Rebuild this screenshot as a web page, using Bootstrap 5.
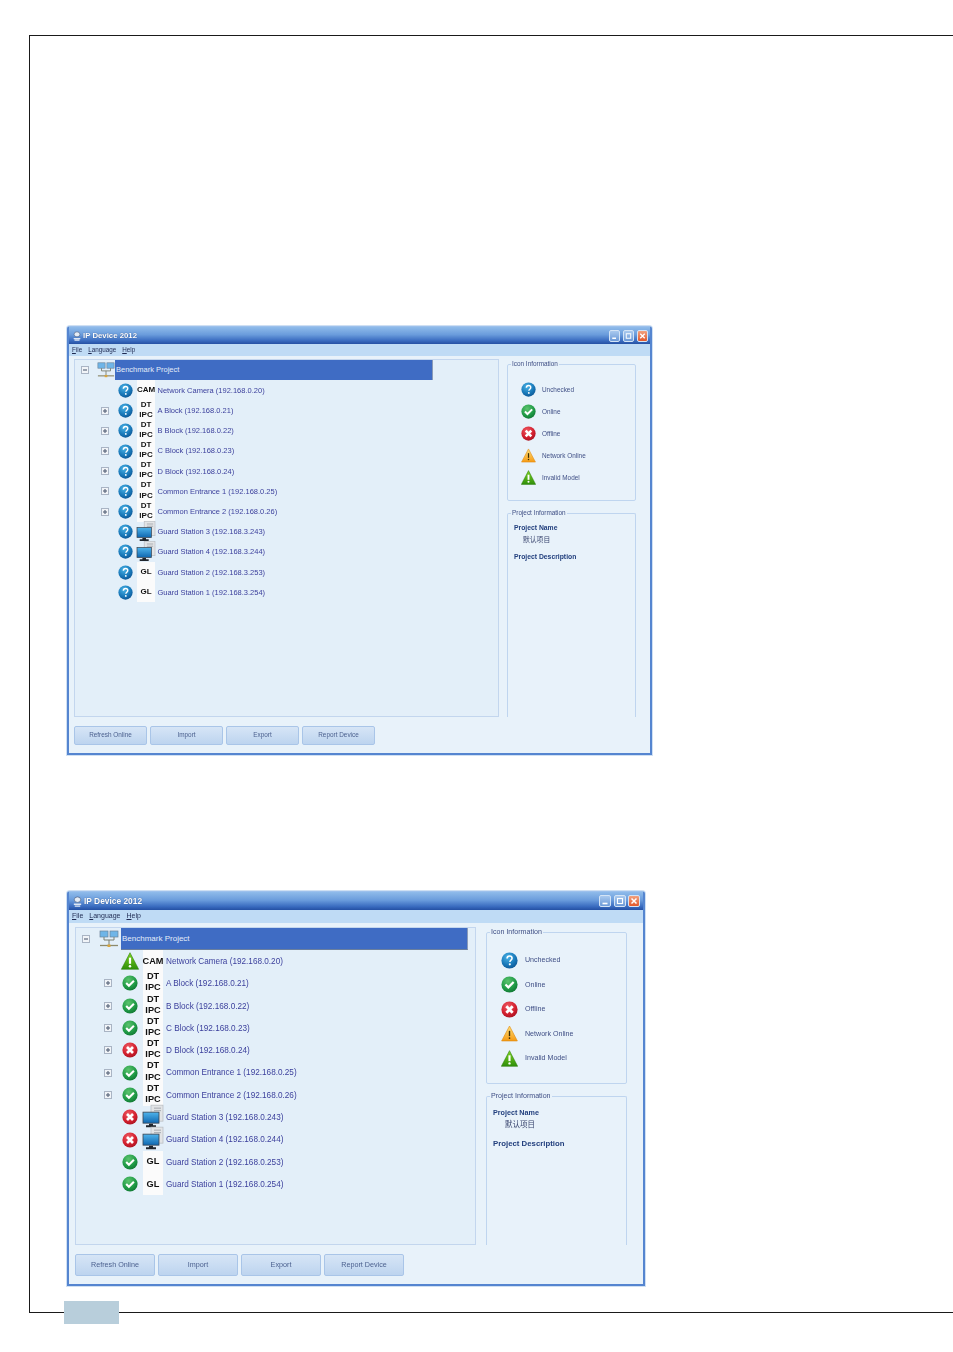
<!DOCTYPE html>
<html lang="en"><head><meta charset="utf-8"><title>IP Device 2012</title>
<link href="https://cdn.jsdelivr.net/npm/bootstrap@5.3.0/dist/css/bootstrap.min.css" rel="stylesheet">
<style>
body{background:#fff;margin:0;font-family:"Liberation Sans","Noto Sans CJK SC",sans-serif;}
.svg-sprite{position:absolute;width:0;height:0;}
.page-frame{margin:35px 0 0 29px;height:1278px;border:1px solid #1a1a1a;border-right:0;}
.page-tab{position:absolute;left:64px;top:1301px;width:55px;height:23px;background:#b8cedb;}
.win{display:flex;flex-direction:column;margin-left:var(--wx);width:var(--ww);height:var(--wh);border:2px solid #5585d0;border-top:1px solid #9cc0ec;border-radius:3px 3px 0 0;background:#e8f2fa;box-shadow:0 0 0 1px #cfe0f3;filter:blur(.35px);}
.win-one{--wx:37px;--ww:585px;--wh:429px;--fs:7.5px;--title:7.8px;--menu:6.3px;--sf:6.4px;margin-top:290px;}
.win-two{--wx:37px;--ww:578px;--wh:395px;--fs:8.2px;--title:8.4px;--menu:7px;--sf:7.1px;margin-top:136px;}
.win-title{flex:none;height:var(--th);display:flex;align-items:center;padding:0 2px 0 3px;background:linear-gradient(#8fbbea,#6a9cdc 45%,#3a6cc0 80%,#2450a4);color:#fff;font-size:var(--title);font-weight:700;}
.win-one .win-title{--th:17px;}.win-two .win-title{--th:18px;padding-right:3px;}
.win-title span{margin-left:1px;text-shadow:0 0 1px #23457f;}
.win-ctl{width:var(--cw);height:12px;border:1px solid #d4e4f6;border-radius:2px;background:linear-gradient(#a9c9ee,#6c9ad8);position:relative;margin-left:var(--cg);}
.win-one .win-ctl{--cw:11px;--cg:3px;}.win-two .win-ctl{--cw:12px;--cg:2.5px;}
.win-ctl.ctl-x{background:linear-gradient(#f2a27f,#e2582b);}
.win-ctl svg{position:absolute;inset:0;width:100%;height:100%;}
.win-menu{flex:none;display:flex;gap:var(--mg);align-items:center;height:var(--mh);padding-left:3px;background:#bfdbf5;font-size:var(--menu);color:#1f2a52;}
.win-one .win-menu{--mh:12px;--mg:6px;}.win-two .win-menu{--mh:13px;--mg:6px;}
.win-body{flex:none;display:flex;min-height:0;}
.win-one .win-body{padding:3px 0 0 5px;}.win-two .win-body{padding:4px 0 0 6px;}
.tree-panel{flex:none;width:var(--pw);height:var(--ph);border:1px solid #c3d6ee;background:#e3eff9;}
.win-one .tree-panel{--pw:425px;--ph:358px;}.win-two .tree-panel{--pw:401px;--ph:318px;}
.tree-root,.tree-row{display:flex;align-items:center;font-size:var(--fs);color:#3b3f9c;white-space:nowrap;}
.win-one .tree-root{height:20px;margin-bottom:.4px;padding-left:6px;}
.win-two .tree-root{height:22px;padding-left:6px;}
.win-one .tree-row{height:20.2px;padding-left:26px;}
.win-two .tree-row{height:22.3px;padding-left:28px;}
.tree-exp{flex:none;width:8px;height:8px;border:1px solid #a9b4c4;background:#f1f4f8;position:relative;}
.tree-exp::before{content:"";position:absolute;left:1px;right:1px;top:2px;height:2px;background:#5f6b80;transform:scaleY(.6);}
.tree-exp.is-plus::after{content:"";position:absolute;top:1px;bottom:1px;left:2px;width:2px;background:#5f6b80;transform:scaleX(.6);}
.net-glyph{flex:none;}
.win-one .net-glyph{width:18px;height:18px;margin-left:8px;}
.win-two .net-glyph{width:20px;height:20px;margin-left:9px;margin-right:2px;}
.root-label{flex:1;align-self:stretch;display:flex;align-items:center;background:#3f6cc4;color:#e4edf9;padding-left:1px;border-right:1px solid #8a9bb8;}
.win-one .root-label{margin-right:65px;font-size:7.5px;}
.win-two .root-label{margin-right:7px;border-bottom:1px solid #6a7f9e;font-size:8px;padding-top:1px;}
.stat-glyph{flex:none;}
.win-one .stat-glyph{width:15px;height:15px;margin-left:8.5px;}
.win-two .stat-glyph{width:16px;height:16px;margin-left:10px;}
.win-one .no-exp{margin-left:16.5px;}.win-two .no-exp{margin-left:18px;}
.win-two .tri-root{width:20px;height:18px;margin-left:16px;margin-right:-2px;}
.tag-box{flex:none;align-self:stretch;background:#fbfbfb;color:#111;font-weight:700;display:flex;flex-direction:column;align-items:center;justify-content:center;line-height:1;}
.win-one .tag-box{width:18px;margin-left:4.5px;font-size:8px;}
.win-two .tag-box{width:20px;margin-left:5px;font-size:9.2px;}
.tag-pair{justify-content:space-between;padding:0 0 2px;}
.tag-pair b{display:block;font-weight:700;}
.tag-plain{background:transparent;}
.tag-plain svg{width:100%;height:100%;overflow:visible;}
.tree-text{margin-left:2.5px;}
.win-two .tree-text{margin-left:3px;padding-top:2px;}
.side-col{flex:none;display:flex;flex-direction:column;}
.win-one .side-col{width:129px;margin-left:8px;padding-top:2px;}
.win-two .side-col{width:141px;margin-left:10px;padding-top:2px;}
.side-set{border:1px solid #bfd5ef;border-radius:2px;color:#3f4f85;font-size:var(--sf);margin:0;padding:0;}
.side-set legend{float:none;width:auto;margin:0 0 0 3px;padding:0 1px;font-size:var(--sf);line-height:1;white-space:nowrap;color:#3f4f85;}
.win-one .set-icons{height:140px;margin-bottom:9px;}
.win-two .set-icons{height:155px;margin-bottom:9px;}
.set-proj{flex:none;border-bottom:0;border-radius:2px 2px 0 0;}
.win-one .set-proj{height:207px;}
.win-two .set-proj{height:152px;}
.legend-row{display:flex;align-items:center;}
.win-one .legend-row{height:22.1px;padding-left:13px;}
.win-two .legend-row{height:24.5px;padding-left:14px;}
.win-one .legend-list{padding-top:11px;}.win-two .legend-list{padding-top:12px;}
.legend-row svg{flex:none;}
.win-one .legend-row svg{width:15px;height:15px;margin-right:6px;}
.win-two .legend-row svg{width:17px;height:17px;margin-right:7px;}
.proj-name{font-weight:700;color:#23407e;}
.win-one .proj-block{padding:6px 0 0 6px;font-size:6.8px;line-height:11.5px;}
.win-two .proj-block{padding:7px 0 0 6px;font-size:7.2px;line-height:11.5px;}
.proj-val{padding-left:9px;color:#39456e;}
.win-two .proj-val{padding-left:12px;font-size:7.5px;}
.win-one .proj-desc{margin-top:6px;}.win-two .proj-desc{margin-top:8px;font-size:7.8px;}
.btn-bar{flex:none;display:flex;}
.win-one .btn-bar{padding:9px 0 0 5px;gap:3px;}
.win-two .btn-bar{padding:9px 0 0 6px;gap:3px;}
.btn-bar .btn{--bs-btn-padding-x:0;--bs-btn-padding-y:0;--bs-btn-border-radius:2px;flex:none;background:linear-gradient(#d6e5f6,#bdd4ef);border:1px solid #a9c5e8;color:#4c618f;line-height:1;}
.win-one .btn-bar .btn{width:73px;height:19px;font-size:6.4px;}
.win-two .btn-bar .btn{width:80px;height:22px;font-size:7.2px;}
</style></head><body>
<svg class="svg-sprite" aria-hidden="true">
<defs>
<radialGradient id="gBlue" cx=".4" cy=".3" r=".8"><stop offset="0" stop-color="#49b3e6"/><stop offset=".6" stop-color="#1877b8"/><stop offset="1" stop-color="#0c4f8c"/></radialGradient>
<radialGradient id="gGreen" cx=".4" cy=".3" r=".8"><stop offset="0" stop-color="#5cc46e"/><stop offset=".6" stop-color="#1f9a46"/><stop offset="1" stop-color="#0e6e2e"/></radialGradient>
<radialGradient id="gRed" cx=".4" cy=".3" r=".8"><stop offset="0" stop-color="#ef5a63"/><stop offset=".6" stop-color="#d21f2e"/><stop offset="1" stop-color="#9c0f1e"/></radialGradient>
<linearGradient id="gOrange" x1="0" y1="0" x2="0" y2="1"><stop offset="0" stop-color="#ffe27a"/><stop offset="1" stop-color="#f59a14"/></linearGradient>
<linearGradient id="gLime" x1="0" y1="0" x2="0" y2="1"><stop offset="0" stop-color="#7ed321"/><stop offset="1" stop-color="#2f8f0a"/></linearGradient>
<linearGradient id="gScreen" x1="0" y1="0" x2="0" y2="1"><stop offset="0" stop-color="#4fb4ec"/><stop offset="1" stop-color="#0f67b0"/></linearGradient>
<symbol id="i-q" viewBox="0 0 16 16"><circle cx="8" cy="8" r="7.6" fill="url(#gBlue)"/><path d="M5.700 6.200c0-1.500 1-2.400 2.400-2.400s2.300.8 2.300 2c0 1.900-2 1.800-2 3.500" fill="none" stroke="#fff" stroke-width="1.500"/><circle cx="8.300" cy="11.600" r="1" fill="#fff"/></symbol>
<symbol id="i-ok" viewBox="0 0 16 16"><circle cx="8" cy="8" r="7.6" fill="url(#gGreen)"/><path d="M4.200 8l2.700 2.700 5-5" fill="none" stroke="#fff" stroke-width="2.100"/></symbol>
<symbol id="i-x" viewBox="0 0 16 16"><circle cx="8" cy="8" r="7.6" fill="url(#gRed)"/><path d="M5 5l6 6M11 5l-6 6" fill="none" stroke="#fff" stroke-width="2.700"/></symbol>
<symbol id="i-warn" viewBox="0 0 16 16"><path d="M8 1l7.400 14H.6z" fill="url(#gOrange)" stroke="#e08a10" stroke-width=".6"/><path d="M8 5.500v5" stroke="#3a2c05" stroke-width="1.300"/><circle cx="8" cy="12.300" r=".8" fill="#3a2c05"/></symbol>
<symbol id="i-bad" viewBox="0 0 16 16"><path d="M8 .6l7.700 14.800H.3z" fill="url(#gLime)" stroke="#2b7d0a" stroke-width=".5"/><path d="M8 5v5.500" stroke="#fff" stroke-width="2"/><circle cx="8" cy="12.600" r="1.100" fill="#fff"/></symbol>
<symbol id="i-pc" viewBox="0 0 20 20" overflow="visible"><rect x="8" y="-2" width="12" height="16" fill="#e2e4e6" stroke="#b6babf" stroke-width=".7"/><path d="M11 1h7M11 3.500h7" stroke="#9fa4aa" stroke-width=".9"/><rect x="0" y="5" width="16" height="11" fill="url(#gScreen)" stroke="#39434f" stroke-width=".8"/><path d="M6 16.500h4v1.500h3v2H3v-2h3z" fill="#20262d"/></symbol>
<symbol id="i-net" viewBox="0 0 20 20"><rect x="1" y="2" width="8" height="6" fill="#6fb5e8" stroke="#6c8398" stroke-width=".7"/><rect x="11" y="2" width="8" height="6" fill="#6fb5e8" stroke="#6c8398" stroke-width=".7"/><path d="M5 8v3h10V8M10 11v5" fill="none" stroke="#7a7f70" stroke-width="1"/><path d="M1 16.500h18" stroke="#8d8a6c" stroke-width="1.300"/><rect x="8.500" y="15.500" width="3" height="2.500" fill="#d7a53e"/></symbol>
<symbol id="i-app" viewBox="0 0 12 12"><ellipse cx="6" cy="4" rx="3.500" ry="3" fill="#e6edf6" stroke="#46597a" stroke-width=".7"/><path d="M2 9h8M3 11h6" stroke="#dfe8f4" stroke-width="1.500"/></symbol>
</defs>
</svg>

<div class="page-frame">

<section class="win win-one">
  <div class="win-title"><svg width="10" height="10"><use href="#i-app"/></svg><span>IP Device 2012</span>
    <div class="ms-auto d-flex">
      <div class="win-ctl"><svg viewBox="0 0 12 12"><rect x="3" y="8" width="5" height="2" fill="#fff"/></svg></div>
      <div class="win-ctl"><svg viewBox="0 0 12 12"><rect x="3" y="3" width="6" height="6" fill="none" stroke="#fff" stroke-width="1.300"/></svg></div>
      <div class="win-ctl ctl-x"><svg viewBox="0 0 12 12"><path d="M3 3l6 6M9 3l-6 6" stroke="#fff" stroke-width="1.800"/></svg></div>
    </div></div>
  <div class="win-menu"><span><u>F</u>ile</span><span><u>L</u>anguage</span><span><u>H</u>elp</span></div>
  <div class="win-body">
    <div class="tree-panel">
      <div class="tree-root"><div class="tree-exp"></div><svg class="net-glyph"><use href="#i-net"/></svg><div class="root-label">Benchmark Project</div></div>
      <div class="tree-row"><svg class="stat-glyph no-exp"><use href="#i-q"/></svg><div class="tag-box">CAM</div><span class="tree-text">Network Camera (192.168.0.20)</span></div>
      <div class="tree-row"><div class="tree-exp is-plus"></div><svg class="stat-glyph"><use href="#i-q"/></svg><div class="tag-box tag-pair"><b>DT</b><b>IPC</b></div><span class="tree-text">A Block (192.168.0.21)</span></div>
      <div class="tree-row"><div class="tree-exp is-plus"></div><svg class="stat-glyph"><use href="#i-q"/></svg><div class="tag-box tag-pair"><b>DT</b><b>IPC</b></div><span class="tree-text">B Block (192.168.0.22)</span></div>
      <div class="tree-row"><div class="tree-exp is-plus"></div><svg class="stat-glyph"><use href="#i-q"/></svg><div class="tag-box tag-pair"><b>DT</b><b>IPC</b></div><span class="tree-text">C Block (192.168.0.23)</span></div>
      <div class="tree-row"><div class="tree-exp is-plus"></div><svg class="stat-glyph"><use href="#i-q"/></svg><div class="tag-box tag-pair"><b>DT</b><b>IPC</b></div><span class="tree-text">D Block (192.168.0.24)</span></div>
      <div class="tree-row"><div class="tree-exp is-plus"></div><svg class="stat-glyph"><use href="#i-q"/></svg><div class="tag-box tag-pair"><b>DT</b><b>IPC</b></div><span class="tree-text">Common Entrance 1 (192.168.0.25)</span></div>
      <div class="tree-row"><div class="tree-exp is-plus"></div><svg class="stat-glyph"><use href="#i-q"/></svg><div class="tag-box tag-pair"><b>DT</b><b>IPC</b></div><span class="tree-text">Common Entrance 2 (192.168.0.26)</span></div>
      <div class="tree-row"><svg class="stat-glyph no-exp"><use href="#i-q"/></svg><div class="tag-box tag-plain"><svg><use href="#i-pc"/></svg></div><span class="tree-text">Guard Station 3 (192.168.3.243)</span></div>
      <div class="tree-row"><svg class="stat-glyph no-exp"><use href="#i-q"/></svg><div class="tag-box tag-plain"><svg><use href="#i-pc"/></svg></div><span class="tree-text">Guard Station 4 (192.168.3.244)</span></div>
      <div class="tree-row"><svg class="stat-glyph no-exp"><use href="#i-q"/></svg><div class="tag-box">GL</div><span class="tree-text">Guard Station 2 (192.168.3.253)</span></div>
      <div class="tree-row"><svg class="stat-glyph no-exp"><use href="#i-q"/></svg><div class="tag-box">GL</div><span class="tree-text">Guard Station 1 (192.168.3.254)</span></div>
    </div>
    <div class="side-col">
      <fieldset class="side-set set-icons"><legend>Icon Information</legend>
        <div class="legend-list">
          <div class="legend-row"><svg><use href="#i-q"/></svg>Unchecked</div>
          <div class="legend-row"><svg><use href="#i-ok"/></svg>Online</div>
          <div class="legend-row"><svg><use href="#i-x"/></svg>Offline</div>
          <div class="legend-row"><svg><use href="#i-warn"/></svg>Network Online</div>
          <div class="legend-row"><svg><use href="#i-bad"/></svg>Invalid Model</div>
        </div></fieldset>
      <fieldset class="side-set set-proj"><legend>Project Information</legend>
        <div class="proj-block"><div class="proj-name">Project Name</div><div class="proj-val">默认项目</div><div class="proj-name proj-desc">Project Description</div></div></fieldset>
    </div>
  </div>
  <div class="btn-bar"><button class="btn" type="button">Refresh Online</button><button class="btn" type="button">Import</button><button class="btn" type="button">Export</button><button class="btn" type="button">Report Device</button></div>
</section>

<section class="win win-two">
  <div class="win-title"><svg width="11" height="11"><use href="#i-app"/></svg><span>IP Device 2012</span>
    <div class="ms-auto d-flex">
      <div class="win-ctl"><svg viewBox="0 0 12 12"><rect x="3" y="8" width="6" height="2" fill="#fff"/></svg></div>
      <div class="win-ctl"><svg viewBox="0 0 12 12"><rect x="3" y="3" width="6" height="6" fill="none" stroke="#fff" stroke-width="1.300"/></svg></div>
      <div class="win-ctl ctl-x"><svg viewBox="0 0 12 12"><path d="M3 3l6 6M9 3l-6 6" stroke="#fff" stroke-width="1.800"/></svg></div>
    </div></div>
  <div class="win-menu"><span><u>F</u>ile</span><span><u>L</u>anguage</span><span><u>H</u>elp</span></div>
  <div class="win-body">
    <div class="tree-panel">
      <div class="tree-root"><div class="tree-exp"></div><svg class="net-glyph"><use href="#i-net"/></svg><div class="root-label">Benchmark Project</div></div>
      <div class="tree-row"><svg class="stat-glyph tri-root"><use href="#i-bad"/></svg><div class="tag-box">CAM</div><span class="tree-text">Network Camera (192.168.0.20)</span></div>
      <div class="tree-row"><div class="tree-exp is-plus"></div><svg class="stat-glyph"><use href="#i-ok"/></svg><div class="tag-box tag-pair"><b>DT</b><b>IPC</b></div><span class="tree-text">A Block (192.168.0.21)</span></div>
      <div class="tree-row"><div class="tree-exp is-plus"></div><svg class="stat-glyph"><use href="#i-ok"/></svg><div class="tag-box tag-pair"><b>DT</b><b>IPC</b></div><span class="tree-text">B Block (192.168.0.22)</span></div>
      <div class="tree-row"><div class="tree-exp is-plus"></div><svg class="stat-glyph"><use href="#i-ok"/></svg><div class="tag-box tag-pair"><b>DT</b><b>IPC</b></div><span class="tree-text">C Block (192.168.0.23)</span></div>
      <div class="tree-row"><div class="tree-exp is-plus"></div><svg class="stat-glyph"><use href="#i-x"/></svg><div class="tag-box tag-pair"><b>DT</b><b>IPC</b></div><span class="tree-text">D Block (192.168.0.24)</span></div>
      <div class="tree-row"><div class="tree-exp is-plus"></div><svg class="stat-glyph"><use href="#i-ok"/></svg><div class="tag-box tag-pair"><b>DT</b><b>IPC</b></div><span class="tree-text">Common Entrance 1 (192.168.0.25)</span></div>
      <div class="tree-row"><div class="tree-exp is-plus"></div><svg class="stat-glyph"><use href="#i-ok"/></svg><div class="tag-box tag-pair"><b>DT</b><b>IPC</b></div><span class="tree-text">Common Entrance 2 (192.168.0.26)</span></div>
      <div class="tree-row"><svg class="stat-glyph no-exp"><use href="#i-x"/></svg><div class="tag-box tag-plain"><svg><use href="#i-pc"/></svg></div><span class="tree-text">Guard Station 3 (192.168.0.243)</span></div>
      <div class="tree-row"><svg class="stat-glyph no-exp"><use href="#i-x"/></svg><div class="tag-box tag-plain"><svg><use href="#i-pc"/></svg></div><span class="tree-text">Guard Station 4 (192.168.0.244)</span></div>
      <div class="tree-row"><svg class="stat-glyph no-exp"><use href="#i-ok"/></svg><div class="tag-box">GL</div><span class="tree-text">Guard Station 2 (192.168.0.253)</span></div>
      <div class="tree-row"><svg class="stat-glyph no-exp"><use href="#i-ok"/></svg><div class="tag-box">GL</div><span class="tree-text">Guard Station 1 (192.168.0.254)</span></div>
    </div>
    <div class="side-col">
      <fieldset class="side-set set-icons"><legend>Icon Information</legend>
        <div class="legend-list">
          <div class="legend-row"><svg><use href="#i-q"/></svg>Unchecked</div>
          <div class="legend-row"><svg><use href="#i-ok"/></svg>Online</div>
          <div class="legend-row"><svg><use href="#i-x"/></svg>Offline</div>
          <div class="legend-row"><svg><use href="#i-warn"/></svg>Network Online</div>
          <div class="legend-row"><svg><use href="#i-bad"/></svg>Invalid Model</div>
        </div></fieldset>
      <fieldset class="side-set set-proj"><legend>Project Information</legend>
        <div class="proj-block"><div class="proj-name">Project Name</div><div class="proj-val">默认项目</div><div class="proj-name proj-desc">Project Description</div></div></fieldset>
    </div>
  </div>
  <div class="btn-bar"><button class="btn" type="button">Refresh Online</button><button class="btn" type="button">Import</button><button class="btn" type="button">Export</button><button class="btn" type="button">Report Device</button></div>
</section>
</div>
<div class="page-tab"></div>
</body></html>
